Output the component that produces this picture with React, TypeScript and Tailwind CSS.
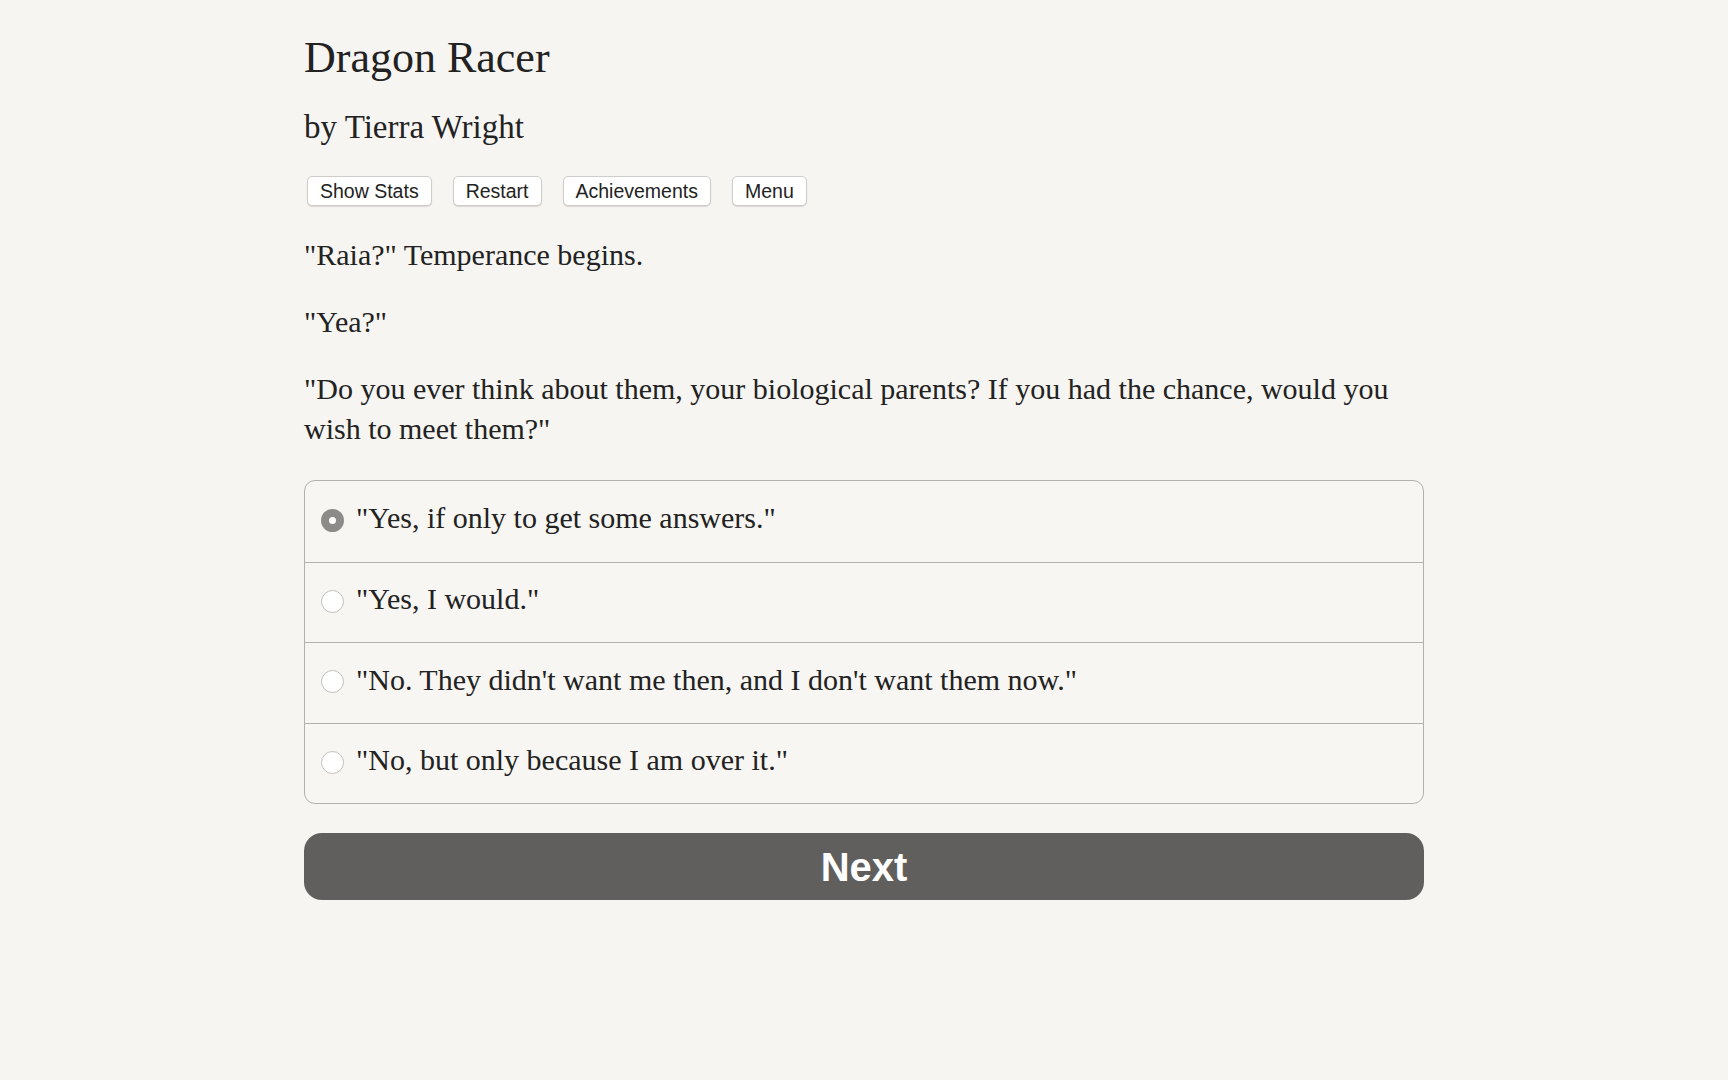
import React from "react";

const serif = { fontFamily: '"Liberation Serif", "Times New Roman", serif' };

function Radio({ checked }: { checked: boolean }) {
  if (checked) {
    return (
      <span className="mt-[4px] flex h-[23px] w-[23px] shrink-0 items-center justify-center rounded-full bg-[#8c8b89]">
        <span className="h-[7px] w-[7px] rounded-full bg-white" />
      </span>
    );
  }
  return <span className="mt-[4px] h-[23px] w-[23px] shrink-0 rounded-full border border-[#c2c0bd] bg-white" />;
}

export default function App() {
  const choices = [
    '"Yes, if only to get some answers."',
    '"Yes, I would."',
    '"No. They didn\'t want me then, and I don\'t want them now."',
    '"No, but only because I am over it."',
  ];
  const buttons = ["Show Stats", "Restart", "Achievements", "Menu"];
  return (
    <div className="min-h-[1080px] w-full bg-[#f7f5f1] text-[#222222]" style={serif}>
      <div className="mx-auto w-[1120px] pt-[32px]">
        <h1 className="text-[44px] leading-[52px] font-normal">Dragon Racer</h1>
        <h2 className="mt-[23px] text-[33px] leading-[40px] font-normal">by Tierra Wright</h2>
        <div
          className="mt-[29px] ml-[3px] flex gap-[21px]"
          style={{ fontFamily: '"Liberation Sans", Arial, sans-serif' }}
        >
          {buttons.map((b) => (
            <button
              key={b}
              className="h-[30px] rounded-[5px] border border-[#cfcdca] bg-white px-3 text-[19.5px] leading-[28px] text-[#222] shadow-[0_1px_1px_rgba(0,0,0,0.12)]"
            >
              {b}
            </button>
          ))}
        </div>
        <div className="mt-[29px] flex flex-col gap-[27px] text-[30px] leading-[40px]">
          <p>"Raia?" Temperance begins.</p>
          <p>"Yea?"</p>
          <p className="max-w-[1100px]">
            "Do you ever think about them, your biological parents? If you had the chance, would you wish to meet
            them?"
          </p>
        </div>
        <div className="mt-[31px] overflow-hidden rounded-[11px] border border-[#b3b1ad] bg-[#f8f6f2]">
          {choices.map((c, i) => (
            <div
              key={c}
              className={
                "flex h-[80.5px] items-center gap-[12px] pb-[6px] pl-[16px] text-[30px] " +
                (i > 0 ? "border-t border-[#b3b1ad]" : "")
              }
            >
              <Radio checked={i === 0} />
              <span className="leading-[40px]">{c}</span>
            </div>
          ))}
        </div>
        <button
          className="mt-[29px] flex h-[67px] w-full items-center justify-center rounded-[18px] bg-[#605f5d] text-[40px] font-bold text-white"
          style={{ fontFamily: '"Liberation Sans", Arial, sans-serif' }}
        >
          Next
        </button>
      </div>
    </div>
  );
}
